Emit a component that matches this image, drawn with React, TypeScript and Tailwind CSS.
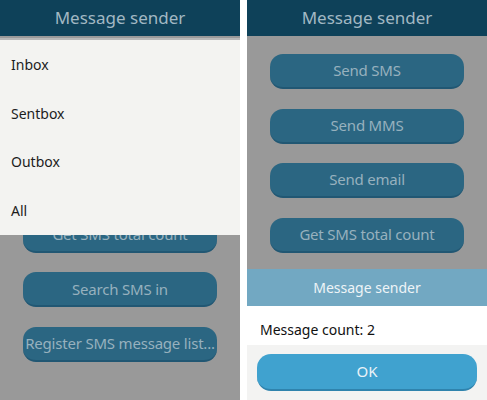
import React from 'react';

const font = { fontFamily: '"Noto Sans", "Open Sans", sans-serif' };

const actions = [
  'Send SMS',
  'Send MMS',
  'Send email',
  'Get SMS total count',
  'Search SMS in',
  'Register SMS message list...',
];

const Header: React.FC = () => (
  <div className="h-[36px] bg-[#0e4159] flex items-center justify-center text-[17px] text-[#a2b8c3]">
    Message sender
  </div>
);

const ActionList: React.FC<{ items: string[] }> = ({ items }) => (
  <div className="flex flex-col gap-[19.6px] pt-[18px] px-[23px]">
    {items.map(label => (
      <div
        key={label}
        className="h-[35px] shrink-0 rounded-[13px] bg-[#2b6682] border-b-2 border-[#215773] flex items-center justify-center text-[15px] text-[#97b1be] whitespace-nowrap overflow-hidden tracking-[-0.2px]"
      >
        {label}
      </div>
    ))}
  </div>
);

const App: React.FC = () => {
  return (
    <div className="w-[487px] h-[400px] bg-white flex gap-[7px] overflow-hidden" style={font}>
      {/* Left screen: storage popup menu */}
      <div className="w-[240px] h-full bg-[#999999] relative overflow-hidden">
        <Header />
        <ActionList items={actions} />

        {/* popup menu */}
        <div className="absolute top-[36px] left-0 right-0">
          <div className="h-[2px] bg-[#9a9a9a]" />
          <div className="h-[2px] bg-[#b8b8b8]" />
          <div className="bg-[#f3f3f1] flex flex-col">
            {['Inbox', 'Sentbox', 'Outbox', 'All'].map(item => (
              <div key={item} className="h-[48.75px] flex items-center pl-[11px] text-[14px] text-[#1c1c1c]">
                {item}
              </div>
            ))}
          </div>
        </div>
      </div>

      {/* Right screen: count dialog */}
      <div className="w-[240px] h-full bg-[#999999] relative overflow-hidden">
        <Header />
        <ActionList items={actions.slice(0, 4)} />

        {/* dialog */}
        <div className="absolute left-0 right-0 bottom-0 top-[269px] flex flex-col">
          <div className="h-[37px] bg-[#72a8c2] flex items-center justify-center text-[14px] text-[#eef4f7]">
            Message sender
          </div>
          <div className="h-[39px] bg-white flex items-center pl-[13px] pt-[8px] text-[14px] text-[#111111]">
            Message count: 2
          </div>
          <div className="flex-1 bg-[#f3f3f2] px-[10px] pt-[9px]">
            <div className="h-[37px] rounded-[14px] bg-[#40a2cf] border-b-2 border-[#2f83ad] flex items-center justify-center text-[15px] text-[#eaf3f8]">
              OK
            </div>
          </div>
        </div>
      </div>
    </div>
  );
};

export default App;
